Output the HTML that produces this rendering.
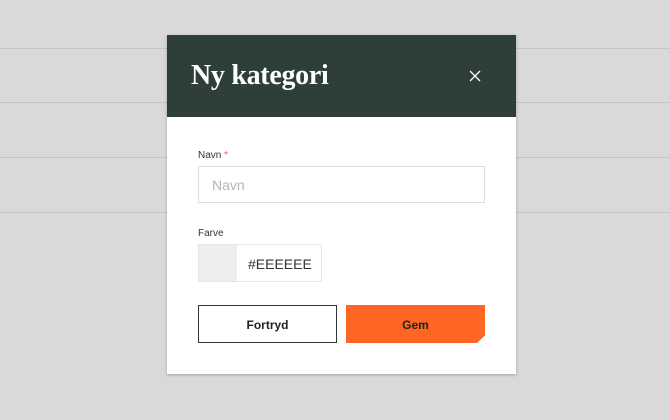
<!DOCTYPE html>
<html><head><style>
*{box-sizing:border-box;margin:0;padding:0}
body{width:670px;height:420px;background:#d8d9d8;position:relative;overflow:hidden;font-family:"Liberation Sans",sans-serif}
.line{position:absolute;left:0;width:670px;height:1px;background:#c4c6c5}
.modal{position:absolute;left:167px;top:35px;width:349px;height:339px;background:#fff;box-shadow:0 1px 3px rgba(0,0,0,.25)}
.hd{height:82px;background:#2e3f38;position:relative}
.hd h1{position:absolute;left:24px;top:25px;font-family:"Liberation Serif",serif;font-weight:bold;font-size:28px;color:#fff;letter-spacing:-.3px}
.x{position:absolute;left:302px;top:35px;width:12px;height:12px}
.lbl{position:absolute;left:31px;font-size:10px;color:#333}
.inp{position:absolute;left:31px;top:131px;width:287px;height:37px;border:1px solid #ddd;font-size:14px;color:#b5b5b5;padding:10px 13px}
.col{position:absolute;left:31px;top:209px;width:124px;height:38px;border:1px solid #e6e6e6;display:flex}
.sw{width:38px;background:#eee}
.col span{font-size:14px;color:#333;padding:11px 0 0 11px}
.btn{position:absolute;top:270px;width:139px;height:38px;font-size:12px;font-weight:bold;color:#222;text-align:center;line-height:40px}
.b1{left:31px;border:1px solid #333;line-height:38px}
.b2{left:179px;background:#ff6624;clip-path:polygon(0 0,100% 0,100% 80%,131px 100%,0 100%)}
</style></head><body>
<div class="line" style="top:48px"></div>
<div class="line" style="top:102px"></div>
<div class="line" style="top:157px"></div>
<div class="line" style="top:212px"></div>
<div class="modal">
<div class="hd"><h1>Ny kategori</h1>
<svg class="x" viewBox="0 0 12 12"><path d="M1 1L11 11M11 1L1 11" stroke="#fff" stroke-width="1.3"/></svg></div>
<div class="lbl" style="top:115px">Navn <span style="color:#f55">*</span></div>
<div class="inp">Navn</div>
<div class="lbl" style="top:193px">Farve</div>
<div class="col"><div class="sw"></div><span>#EEEEEE</span></div>
<div class="btn b1">Fortryd</div>
<div class="btn b2">Gem</div>
</div>
</body></html>
